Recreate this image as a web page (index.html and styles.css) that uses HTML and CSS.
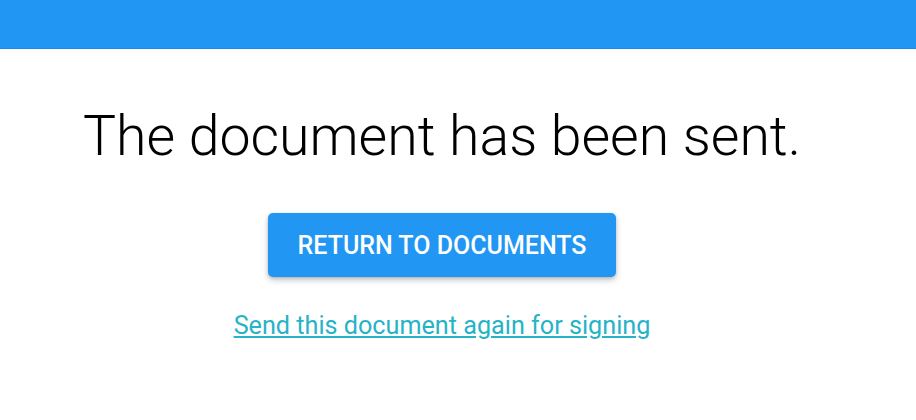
FILE: index.html
```html
<!DOCTYPE html>
<html>
<head>
<meta charset="utf-8">
<link rel="stylesheet" href="styles.css">
</head>
<body>
<header class="topbar"></header>
<main class="content">
  <h1 class="title">The document has been sent.</h1>
  <button class="btn-primary">RETURN TO DOCUMENTS</button>
  <a class="resend" href="#">Send this document again for signing</a>
</main>
</body>
</html>
```
FILE: styles.css
```css
html, body {
  margin: 0;
  padding: 0;
  background: #fff;
  font-family: Roboto, "Liberation Sans", sans-serif;
}
.topbar {
  height: 48px;
  background: #2196f3;
  border-bottom: 1px solid #1e88e5;
}
.content {
  width: 884px;
  display: flex;
  flex-direction: column;
  align-items: center;
}
.title {
  margin: 56px 0 0;
  font-weight: 300;
  font-size: 55.4px;
  line-height: 64px;
  color: #000;
}
.btn-primary {
  margin-top: 44px;
  height: 64px;
  padding: 0 30px;
  border: none;
  border-radius: 5px;
  background: #2196f3;
  color: #fff;
  font-family: Roboto, "Liberation Sans", sans-serif;
  font-weight: 500;
  font-size: 25px;
  box-shadow: 0 3px 6px rgba(0,0,0,0.22), 0 1px 3px rgba(0,0,0,0.14);
}
.resend {
  margin-top: 33px;
  font-size: 25.2px;
  line-height: 32px;
  color: #26b3c7;
  text-decoration: underline;
}
```
